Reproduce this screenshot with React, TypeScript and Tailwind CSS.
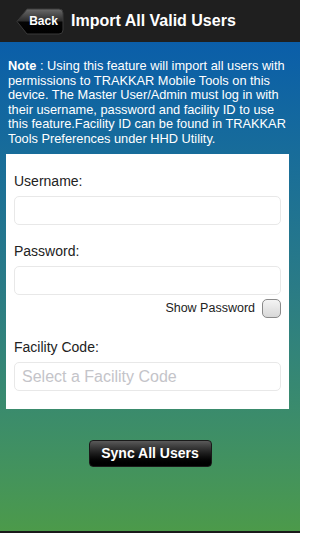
import React from 'react';

function BackButton() {
  return (
    <div className="relative w-[48px] h-[27px] shrink-0">
      <svg width="48" height="27" viewBox="0 0 48 27" className="absolute inset-0">
        <defs>
          <linearGradient id="backGrad" x1="0" y1="0" x2="0" y2="1">
            <stop offset="0" stopColor="#6a6a6a" />
            <stop offset="0.48" stopColor="#2c2c2c" />
            <stop offset="0.52" stopColor="#050505" />
            <stop offset="1" stopColor="#000000" />
          </linearGradient>
        </defs>
        <path
          d="M1 13.5 L11 1 H43 Q47 1 47 5 V22 Q47 26 43 26 H11 Z"
          fill="url(#backGrad)"
          stroke="#3a3a3a"
          strokeWidth="1"
        />
      </svg>
      <span className="absolute inset-0 flex items-center justify-center pl-[7px] text-[12px] font-bold text-white">
        Back
      </span>
    </div>
  );
}

function Field({ label, placeholder }: { label: string; placeholder?: string }) {
  return (
    <div>
      <p className="text-[14px] leading-[17px] text-[#222]">{label}</p>
      <div className="mt-[6px] h-[29px] rounded-[5px] border border-[#e8e8e8] bg-white flex items-center px-[7px]">
        {placeholder && <span className="text-[16px] text-[#c4c4c9]">{placeholder}</span>}
      </div>
    </div>
  );
}

export default function App() {
  return (
    <div
      className="w-[300px] h-[533px] flex flex-col overflow-hidden"
      style={{ fontFamily: '"Liberation Sans", Arial, sans-serif' }}
    >
      {/* Header */}
      <header className="h-[42px] bg-[#1f1f1f] flex items-center pl-[16px] gap-[7px] shrink-0">
        <BackButton />
        <h1 className="text-[16px] font-bold text-white">Import All Valid Users</h1>
      </header>

      <main className="flex-1 bg-gradient-to-b from-[#0b5ea9] via-[#2a7b86] to-[#4c9a4a] flex flex-col">
        <p className="px-[8px] pt-[17px] text-[12.8px] leading-[14.5px] text-white">
          <span className="font-bold">Note</span> : Using this feature will import all users with permissions to
          TRAKKAR Mobile Tools on this device. The Master User/Admin must log in with their username, password and
          facility ID to use this feature.Facility ID can be found in TRAKKAR Tools Preferences under HHD Utility.
        </p>

        <div className="mt-[8px] mx-[6px] w-[283px] bg-white px-[8px] pt-[19px] pb-[18px]">
          <Field label="Username:" />
          <div className="mt-[18px]">
            <Field label="Password:" />
          </div>
          <div className="mt-[4px] flex items-center justify-end gap-[7px]">
            <span className="text-[12.5px] text-[#222]">Show Password</span>
            <div className="w-[19px] h-[19px] rounded-[5px] border border-[#8a8a8a] bg-gradient-to-b from-[#f4f4f4] to-[#d8d8d8]" />
          </div>
          <div className="mt-[21px]">
            <Field label="Facility Code:" placeholder="Select a Facility Code" />
          </div>
        </div>

        <div className="mt-[31px] flex justify-center">
          <button className="w-[123px] h-[27px] rounded-[4px] border border-[#1a1a1a] bg-gradient-to-b from-[#5a5a5a] via-[#1c1c1c] to-black text-[14px] font-bold text-white">
            Sync All Users
          </button>
        </div>
      </main>
      <div className="h-[2px] bg-[#1a1a1a] shrink-0" />
    </div>
  );
}
